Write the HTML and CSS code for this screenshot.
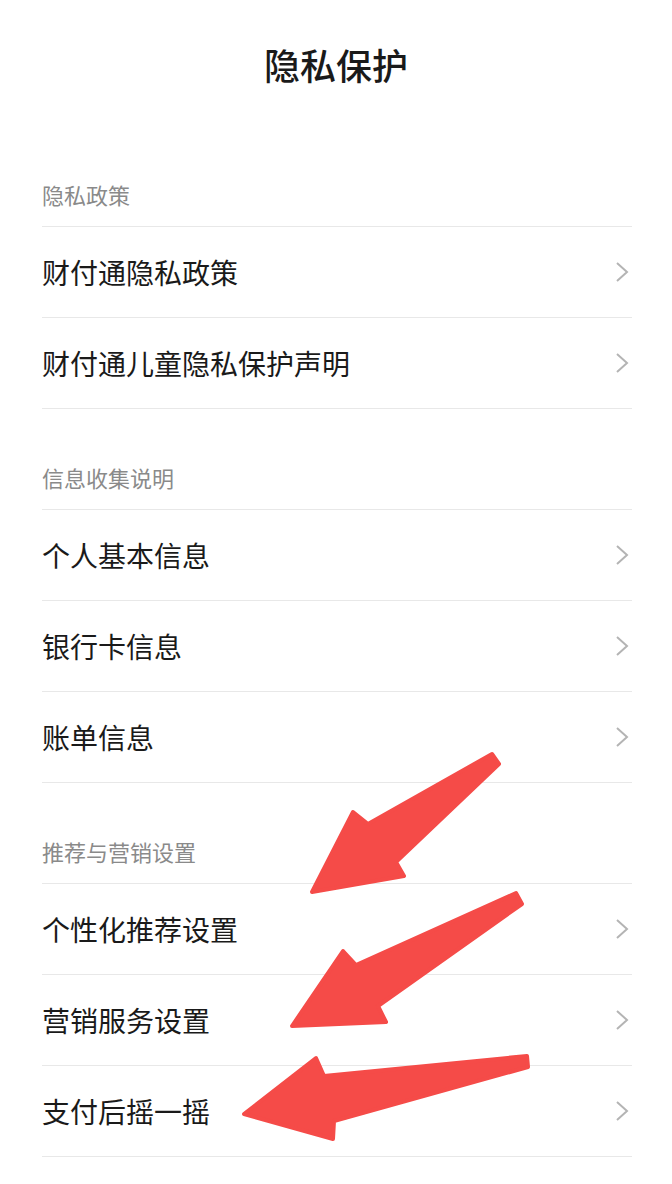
FILE: index.html
```html
<!DOCTYPE html>
<html lang="zh-CN">
<head>
<meta charset="UTF-8">
<meta name="viewport" content="width=device-width, initial-scale=1.0">
<title>隐私保护</title>
<link rel="stylesheet" href="styles.css">
</head>
<body>
<div class="page">
<div class="nav-title">隐私保护</div>

<div class="list">
<div class="group-title">隐私政策</div>
<div class="cell"><span>财付通隐私政策</span><svg class="arrow" viewBox="0 0 14 24"><polyline points="2,3 12,12 2,21"/></svg></div>
<div class="cell"><span>财付通儿童隐私保护声明</span><svg class="arrow" viewBox="0 0 14 24"><polyline points="2,3 12,12 2,21"/></svg></div>

<div class="group-title">信息收集说明</div>
<div class="cell"><span>个人基本信息</span><svg class="arrow" viewBox="0 0 14 24"><polyline points="2,3 12,12 2,21"/></svg></div>
<div class="cell"><span>银行卡信息</span><svg class="arrow" viewBox="0 0 14 24"><polyline points="2,3 12,12 2,21"/></svg></div>
<div class="cell"><span>账单信息</span><svg class="arrow" viewBox="0 0 14 24"><polyline points="2,3 12,12 2,21"/></svg></div>

<div class="group-title">推荐与营销设置</div>
<div class="cell"><span>个性化推荐设置</span><svg class="arrow" viewBox="0 0 14 24"><polyline points="2,3 12,12 2,21"/></svg></div>
<div class="cell"><span>营销服务设置</span><svg class="arrow" viewBox="0 0 14 24"><polyline points="2,3 12,12 2,21"/></svg></div>
<div class="cell"><span>支付后摇一摇</span><svg class="arrow" viewBox="0 0 14 24"><polyline points="2,3 12,12 2,21"/></svg></div>
</div>

<!-- 标注箭头 -->
<svg class="marks" viewBox="0 0 672 1184">
<polygon points="492,754 499,764 396,862 404,876 312,892 353,812 368,824"/>
<polygon points="516,893 522,904 378,1006 386,1022 292,1026 343,951 356,965"/>
<polygon points="527,1056 528,1067 334,1121 333,1139 244,1114 316,1058 324,1076"/>
</svg>
</div>
</body>
</html>
```

FILE: styles.css
```css
:root {
--text-color: #1a1a1a;
--sub-color: #8a8a8a;
--line-color: #e8e8e8;
--mark-color: #f54b48;
}

body {
margin: 0;
background: #fff;
font-family: "Noto Sans CJK SC", "Noto Sans", sans-serif;
}

.page {
position: relative;
width: 672px;
height: 1184px;
overflow: hidden;
}

.nav-title {
height: 126px;
line-height: 128px;
text-align: center;
font-size: 36px;
font-weight: 500;
color: var(--text-color);
}

.list {
padding: 0 40px 0 42px;
}

.group-title {
height: 101px;
box-sizing: border-box;
display: flex;
align-items: flex-end;
padding-bottom: 17px;
line-height: 30px;
font-size: 22px;
color: var(--sub-color);
border-bottom: 1px solid var(--line-color);
}

.cell {
height: 91px;
box-sizing: border-box;
display: flex;
align-items: center;
justify-content: space-between;
padding-right: 3px;
font-size: 28px;
color: var(--text-color);
border-bottom: 1px solid var(--line-color);
}

.arrow {
width: 14px;
height: 24px;
fill: none;
stroke: #b4b4b4;
stroke-width: 2;
}

.marks {
position: absolute;
top: 0;
left: 0;
width: 672px;
height: 1184px;
pointer-events: none;
}

.marks polygon {
fill: var(--mark-color);
stroke: var(--mark-color);
stroke-width: 4;
stroke-linejoin: round;
}
```
